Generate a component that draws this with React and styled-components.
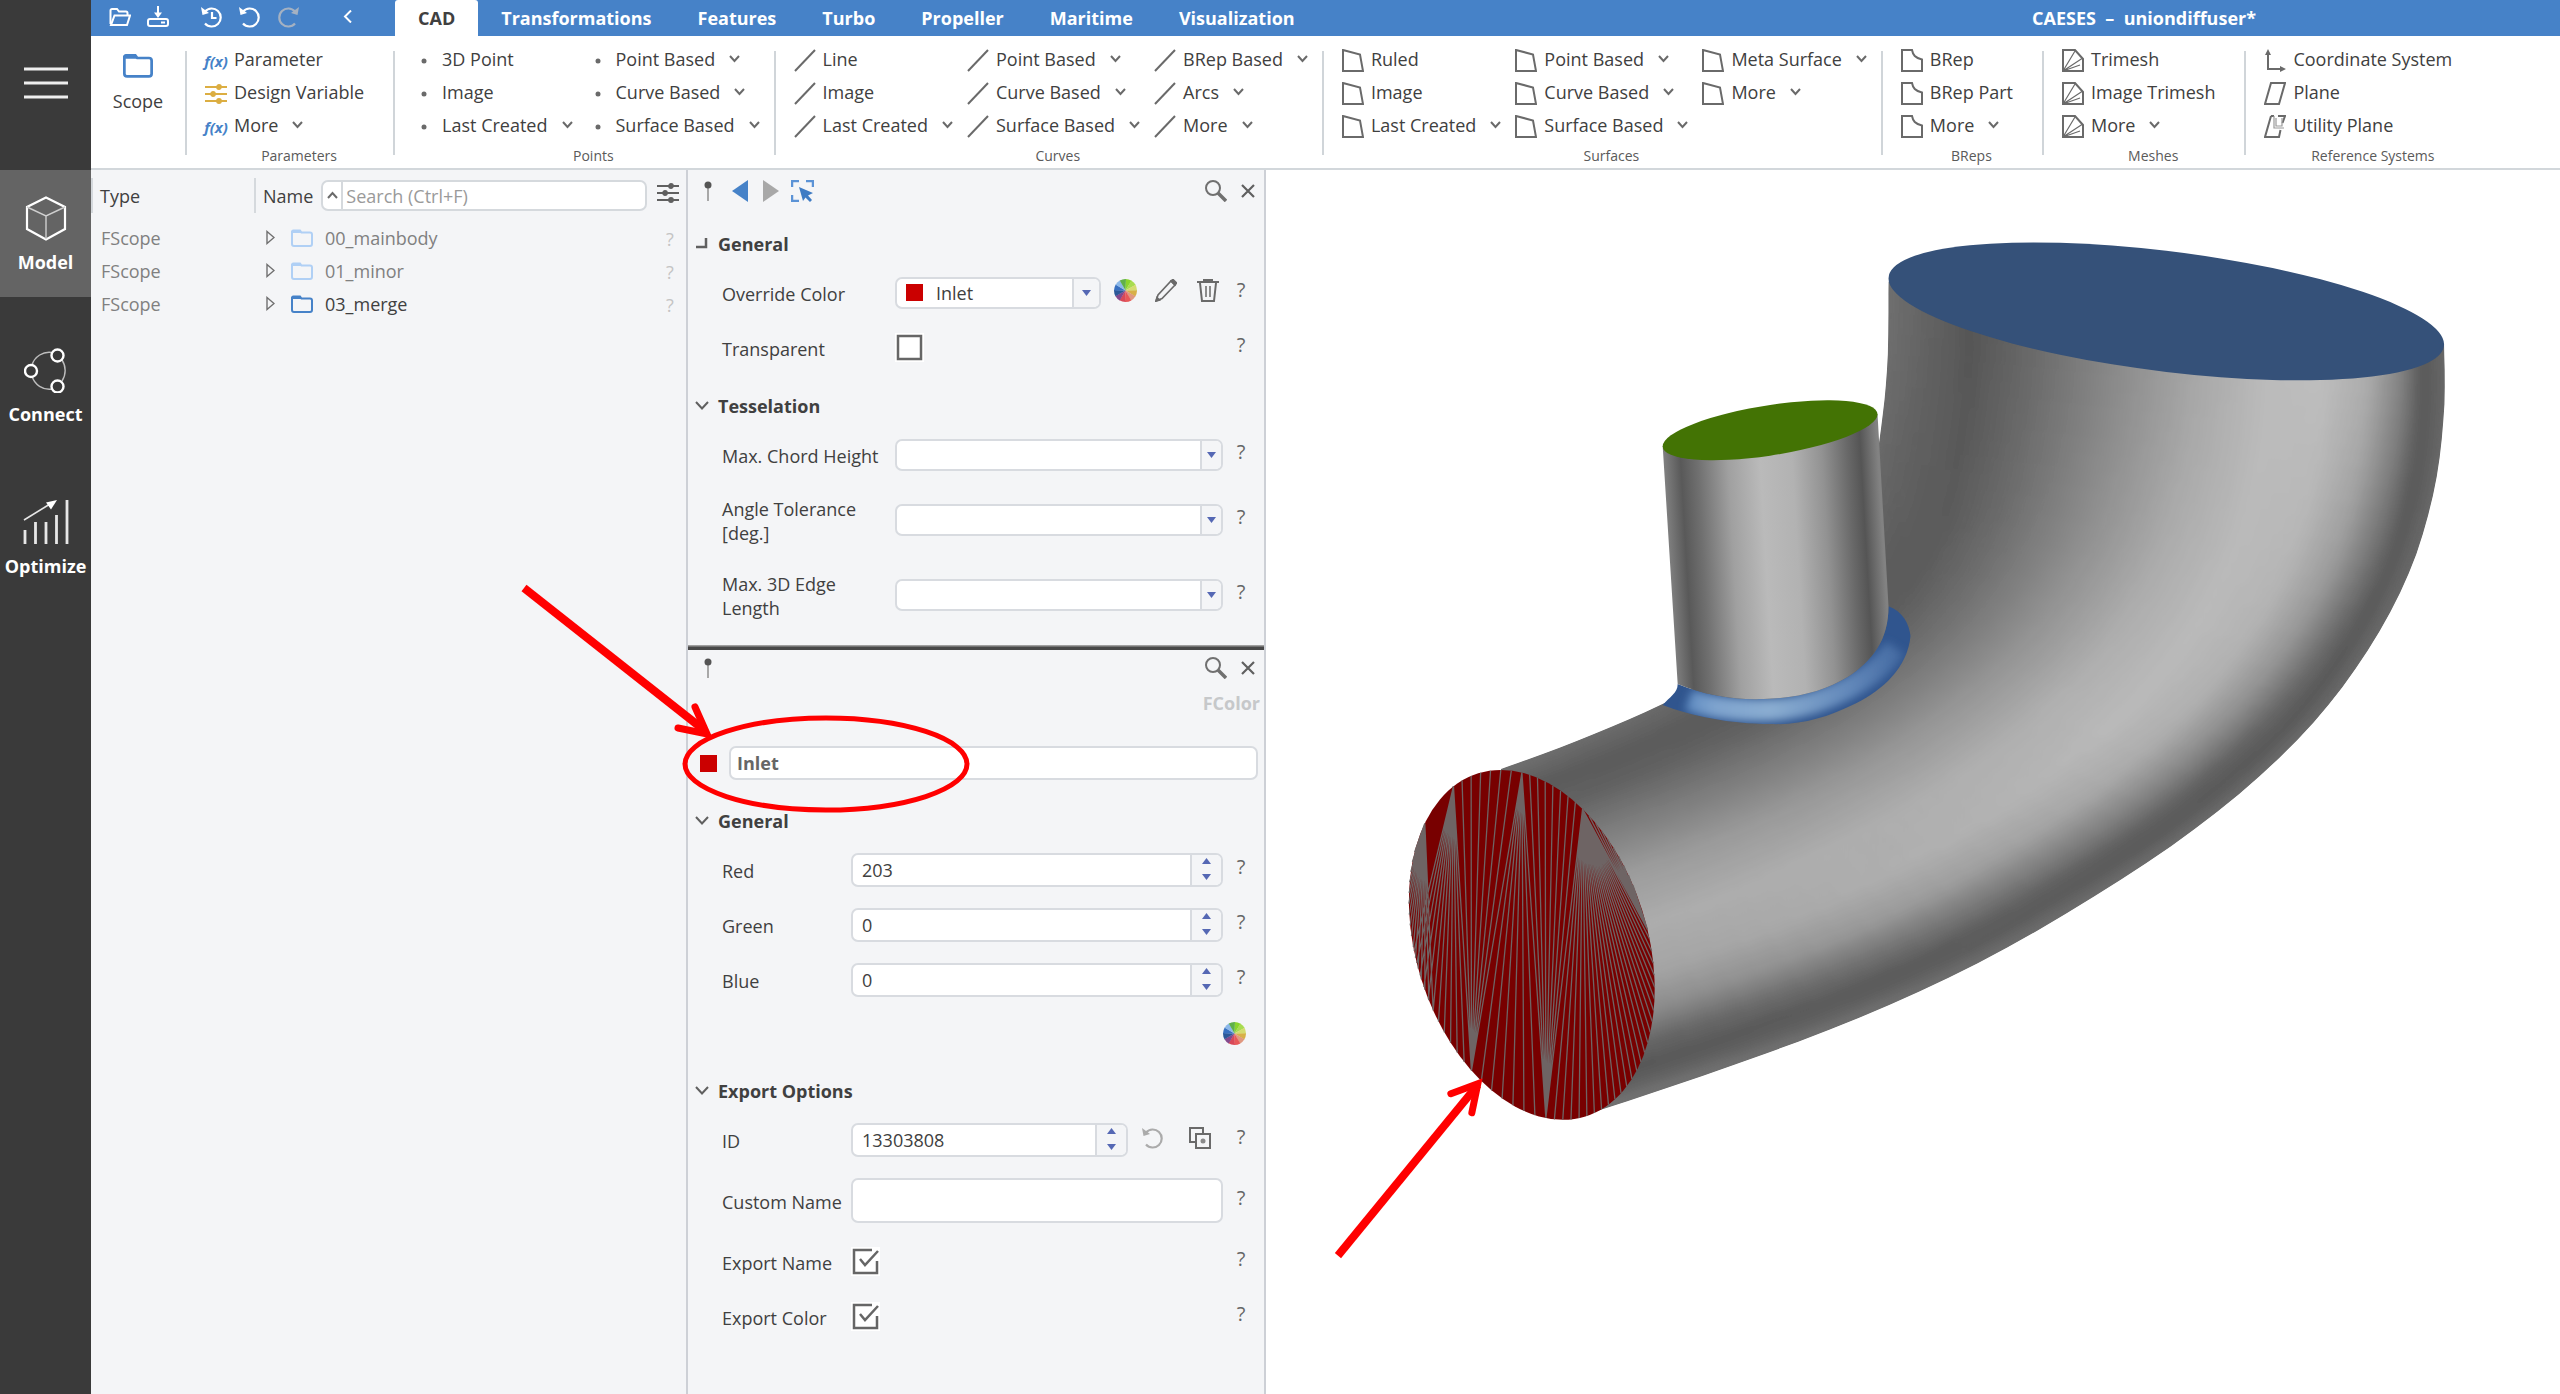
import React from 'react'
import styled, { createGlobalStyle } from 'styled-components'

const GlobalStyle = createGlobalStyle`
  * {
    box-sizing: border-box;
  }

  body {
    margin: 0;
    background: #ffffff;
    color: #404040;
    font-family: "Open Sans", "Noto Sans", sans-serif;
    font-size: 18px;
    line-height: 24px;
  }

  button, input, select {
    margin: 0;
    padding: 0;
    border: 0;
    background: none;
    color: inherit;
    font: inherit;
  }

  svg {
    display: block;
    flex: none;
  }
`

const Page = styled.div`
  display: flex;
  min-height: 100vh;
`

/* ---------- left rail ---------- */

const Rail = styled.nav`
  flex: none;
  width: 91px;
  background: #3a3a3a;
  color: #ffffff;
`

const MenuButton = styled.button`
  display: flex;
  width: 100%;
  height: 170px;
  justify-content: center;
  padding-top: 67px;
`

const Modes = styled.div`
  display: flex;
  flex-direction: column;
  gap: 25px;
`

const ModeButton = styled.button`
  display: flex;
  flex-direction: column;
  align-items: center;
  gap: 9px;
  height: 127px;
  padding-top: 26px;
  font-weight: 700;
  background: ${({ $active }) => ($active ? '#646464' : 'transparent')};
`

/* ---------- title bar ---------- */

const Main = styled.div`
  display: flex;
  flex: 1;
  flex-direction: column;
  min-width: 0;
`

const TopBar = styled.header`
  display: flex;
  align-items: stretch;
  height: 36px;
  background: #4682c8;
  color: #ffffff;
  font-weight: 700;
`

const QuickAccess = styled.div`
  display: flex;
  align-items: center;
  gap: 16px;
  width: 304px;
  padding: 0 36px 3px 18px;
`

const BarButton = styled.button`
  display: flex;
  color: ${({ $off }) => ($off ? '#a4b1c2' : '#ffffff')};
  margin-left: ${({ $apart }) => ($apart ? '16px' : '0')};

  &:last-child {
    margin-left: auto;
  }
`

const Tab = styled.button`
  padding: 0 23px;
  font-weight: 700;
  background: ${({ $active }) => ($active ? '#ffffff' : 'transparent')};
  color: ${({ $active }) => ($active ? '#404040' : '#ffffff')};
  border-radius: 3px 3px 0 0;
`

const WindowTitle = styled.div`
  flex: 1;
  padding: 6px 304px 0 0;
  text-align: right;
  white-space: pre;
`

/* ---------- ribbon ---------- */

const Ribbon = styled.div`
  display: flex;
  height: 134px;
  border-bottom: 2px solid #d2d7db;
`

const ScopeButton = styled.button`
  display: flex;
  flex-direction: column;
  align-items: center;
  gap: 11px;
  width: 94px;
  padding-top: 17px;
`

const Divider = styled.span`
  width: 2px;
  margin: 15px 0 13px;
  background: #d0d5d9;
`

const Group = styled.section`
  display: flex;
  flex-direction: column;
  padding: 6px 0 0 18px;
`

const GroupColumns = styled.div`
  display: flex;
  height: 100px;
`

const GroupColumn = styled.div`
  display: flex;
  flex-direction: column;
  align-items: flex-start;
`

const GroupLabel = styled.div`
  padding-top: 3px;
  font-size: 14px;
  text-align: center;
  color: #5a5a5a;
`

const Tool = styled.button`
  display: flex;
  align-items: center;
  gap: 7px;
  height: 33px;
  padding-right: ${({ $more }) => ($more ? '14px' : '29px')};
  white-space: nowrap;

  & > svg:last-child:not(:first-child) {
    margin-left: 7px;
  }
`

const ToolIcon = styled.span`
  display: flex;
  justify-content: center;
  width: 22px;
  padding-top: 4px;
  color: #6a6a6a;
`

const Fx = styled.span`
  font-size: 15px;
  font-style: italic;
  font-weight: 700;
  color: #4682c8;
`

/* ---------- object tree ---------- */

const Workspace = styled.div`
  position: relative;
  display: flex;
  flex: 1;
  min-height: 0;
`

const TreePane = styled.aside`
  flex: none;
  width: 595px;
  background: #f4f5f7;
`

const Tree = styled.table`
  width: 100%;
  border-collapse: collapse;
  table-layout: fixed;

  th {
    height: 51px;
    padding: 0;
    font-weight: 400;
    text-align: left;
  }

  td {
    height: 33px;
    padding: 0;
    color: #808080;
  }
`

const TypeCol = styled.col`
  width: 163px;
`

const HintCol = styled.col`
  width: 29px;
`

const TypeCell = styled.td`
  && {
    padding-left: 10px;
  }
`

const HeadCell = styled.div`
  display: flex;
  align-items: center;
  height: 35px;
  padding-left: 7px;
  border-left: 2px solid #d5d9dd;
`

const SearchBox = styled.div`
  display: flex;
  flex: 1;
  height: 31px;
  margin: 0 10px 0 8px;
  border: 2px solid #d5d9dd;
  border-radius: 7px;
  background: #ffffff;

  button {
    display: flex;
    align-items: center;
    justify-content: center;
    width: 20px;
    border-right: 2px solid #d5d9dd;
  }

  input {
    flex: 1;
    min-width: 0;
    padding-left: 3px;
    outline: 0;
  }

  input::placeholder {
    color: #9a9a9a;
    opacity: 1;
  }
`

const NodeName = styled.div`
  display: flex;
  align-items: center;
  padding-left: 12px;
  color: ${({ $dim }) => ($dim ? '#808080' : '#404040')};

  button {
    display: flex;
    margin-right: 16px;
  }

  span {
    padding-left: 12px;
  }
`

const HintCell = styled.td`
  && {
    padding: 3px 0 0 9px;
    color: #c4c4c4;
  }
`

/* ---------- inspector ---------- */

const Inspector = styled.aside`
  flex: none;
  width: 580px;
  border: solid #cdd0d6;
  border-width: 0 2px;
  background: #f4f5f7;
`

const Pane = styled.section`
  padding-top: ${({ $first }) => ($first ? '3px' : '0')};
  padding-bottom: 13px;
`

const PaneBar = styled.div`
  display: flex;
  align-items: center;
  height: 36px;
  padding: 0 9px 0 16px;
`

const PaneButton = styled.button`
  display: flex;
  margin-right: ${({ $gap = 0 }) => $gap}px;
`

const Spacer = styled.span`
  flex: 1;
`

const Splitter = styled.hr`
  height: 5px;
  margin: 0;
  border: 0;
  background: linear-gradient(#b4b4b4, #484848 50%);
`

const SectionHead = styled.h2`
  display: flex;
  align-items: center;
  gap: 9px;
  height: 52px;
  margin: ${({ $first }) => ($first ? '4px' : '0')} 0 0;
  padding: 9px 0 0 7px;
  font-size: 18px;
  font-weight: 700;

  button {
    display: flex;
    justify-content: center;
    width: 14px;
  }
`

const Row = styled.div`
  display: grid;
  grid-template-columns: ${({ $label }) => $label}px 1fr 36px;
  align-items: center;
  height: ${({ $height = 55 }) => $height}px;
  padding: 0 5px 0 34px;
`

const RowLabel = styled.label`
  padding: 2px 6px 0 0;
  white-space: pre-line;
`

const Help = styled.button`
  padding-bottom: 5px;
  font-size: 20px;
  color: #666666;
`

const Controls = styled.div`
  display: flex;
  align-items: center;
  padding-right: ${({ $inset = 0 }) => $inset}px;
`

const Field = styled.div`
  display: flex;
  flex: 1;
  height: ${({ $height = 34 }) => $height}px;
  border: 2px solid #d8dbe0;
  border-radius: 7px;
  background: #ffffff;
  overflow: hidden;

  input, select {
    flex: 1;
    width: 0;
    min-width: 0;
    padding-left: ${({ $indent = 9 }) => $indent}px;
    outline: 0;
    appearance: none;
    -moz-appearance: textfield;
  }

  input::-webkit-inner-spin-button {
    display: none;
  }
`

const DropArrow = styled.span`
  display: flex;
  align-items: center;
  justify-content: center;
  width: ${({ $wide }) => ($wide ? '27px' : '21px')};
  border-left: 2px solid #d8dbe0;
  background: #f4f5f7;
  pointer-events: none;
`

const Steps = styled.span`
  display: flex;
  flex-direction: column;
  align-items: center;
  justify-content: space-between;
  width: 31px;
  padding: 3px 0 5px;
  border-left: 2px solid #d8dbe0;
  background: #f4f5f7;
`

const StepButton = styled.button`
  display: flex;
`

const Swatch = styled.span`
  flex: none;
  align-self: center;
  width: 17px;
  height: 17px;
  background: #cb0000;

  ${Field} > & {
    margin-left: 9px;
  }
`

const SideIcon = styled.button`
  display: flex;
  width: 22px;
  margin: 0 0 4px ${({ $gap }) => $gap}px;
`

const CheckBox = styled.span`
  display: grid;
  width: 29px;
  height: 29px;
  background: #ffffff;

  input, svg {
    grid-area: 1 / 1;
    width: 29px;
    height: 29px;
  }

  input {
    appearance: none;
  }

  svg {
    pointer-events: none;
  }
`

const TypeName = styled.div`
  margin-top: 5px;
  padding-right: 4px;
  text-align: right;
  font-weight: 700;
  color: #c6c8ca;
`

const NameRow = styled.div`
  display: flex;
  gap: 12px;
  margin: 31px 6px 10px 12px;
  font-weight: 700;
  color: #666666;
`

const WheelRow = styled.div`
  display: flex;
  align-items: center;
  justify-content: flex-end;
  height: 53px;
  padding-right: 18px;
`

/* ---------- 3d view ---------- */

const View = styled.main`
  flex: 1;
  min-width: 0;
  background: #ffffff;

  svg {
    width: 100%;
    height: 100%;
  }
`

const Markup = styled.svg`
  position: absolute;
  left: 425px;
  top: 410px;
  pointer-events: none;
`

/* ---------- icons ---------- */

const Chevron = ({ up }) => (
  <svg width="11" height="9" viewBox="0 0 11 9" fill="none" stroke="#6a6a6a" strokeWidth="2">
    <path d={up ? 'M1 7 5.5 2 10 7' : 'M1 2 5.5 7 10 2'} />
  </svg>
)

const SectionChevron = () => (
  <svg width="14" height="9" viewBox="0 0 14 9" fill="none" stroke="#606060" strokeWidth="2">
    <path d="M1 1 7 7.5 13 1" />
  </svg>
)

const SectionCorner = () => (
  <svg width="12" height="11" viewBox="0 0 12 11" fill="none" stroke="#606060" strokeWidth="2.5">
    <path d="M10 0V9H0" />
  </svg>
)

const Triangle = ({ up }) => (
  <svg width="9" height="6" viewBox="0 0 9 6" fill="#5568b4">
    <path d={up ? 'M0 6 4.5 0 9 6Z' : 'M0 0H9L4.5 6Z'} />
  </svg>
)

const Folder = ({ width, color }) => (
  <svg width={width} height={Math.round(width * 0.82)} viewBox="0 0 22 18" fill="none" stroke={color} strokeWidth="2">
    <path d="M1 3.5V15a2 2 0 0 0 2 2H19a2 2 0 0 0 2-2V5.5a2 2 0 0 0-2-2H10.5L9 1.5H2.500A1.500 1.500 0 0 0 1 3.500Z" />
    <path d="M1.500 1.200H9L10.500 4H1.500Z" fill={color} stroke="none" />
  </svg>
)

const Sliders = ({ color }) => (
  <svg width="22" height="20" viewBox="0 0 22 20" fill={color} stroke={color} strokeWidth="1.8">
    <path d="M0 3H22M0 10H22M0 17H22" />
    <circle cx="14" cy="3" r="2" />
    <circle cx="8" cy="10" r="2" />
    <circle cx="14" cy="17" r="2" />
  </svg>
)

const Shape = ({ children }) => (
  <svg width="22" height="23" viewBox="0 0 22 23" fill="none" stroke="currentColor" strokeWidth="2">
    {children}
  </svg>
)

const toolIcons = {
  fx: <Fx>f(x)</Fx>,
  sliders: <Sliders color="#dcae42" />,
  point: <Shape><circle cx="11" cy="12" r="2.500" fill="currentColor" stroke="none" /></Shape>,
  curve: <Shape><path d="M1 22 21 1" /></Shape>,
  surface: <Shape><path d="M1 1 18 5.500 21 22H1Z" /></Shape>,
  brep: <Shape><path d="M1 1H11C12 6 14 9 21 10.500V22H1Z" /></Shape>,
  mesh: (
    <Shape>
      <path d="M1 1H13L21 10V22H1Z" />
      <path d="M1 22 13 2M1 22 20 9.500M1 22 18 16" strokeWidth="1.2" />
    </Shape>
  ),
  axes: (
    <Shape>
      <path d="M4 4V20H18" />
      <path d="M1 6 4 0 7 6ZM16 17 22 20 16 23Z" fill="currentColor" stroke="none" />
    </Shape>
  ),
  plane: <Shape><path d="M7 1H21L15 22H1Z" /></Shape>,
  utility: (
    <Shape>
      <path d="M7 1 1 22H15L16.500 15M18.500 8 21 1H14M7 1H10" />
      <path d="M10 1V13H20M12 3V11H18V3" strokeWidth="1.2" stroke="#999999" />
    </Shape>
  ),
}

const OpenIcon = () => (
  <svg width="22" height="18" viewBox="0 0 22 18" fill="none" stroke="currentColor" strokeWidth="2">
    <path d="M1.500 16V2.500A1.500 1.500 0 0 1 3 1H8L10 3.500H17A1.500 1.500 0 0 1 18.500 5V7" />
    <path d="M5.500 7.500H21L18 17H2Z" />
  </svg>
)

const SaveIcon = () => (
  <svg width="22" height="21" viewBox="0 0 22 21" fill="none" stroke="currentColor" strokeWidth="2">
    <path d="M11 0V9" />
    <path d="M7 6.500H15L11 12Z" fill="currentColor" stroke="none" />
    <rect x="1" y="13" width="20" height="7" rx="2" />
    <path d="M14 16.500H18" />
  </svg>
)

const UndoIcon = ({ flip, clock, color = 'currentColor' }) => (
  <svg width="22" height="22" viewBox="0 0 22 22" fill="none" stroke={color} strokeWidth="2.2">
    <g transform={flip ? 'matrix(-1 0 0 1 22 0)' : undefined}>
      <path d="M4 5.500A9 9 0 1 1 4 17.500" />
      <path d="M0 1 1.500 9 8 7Z" fill={color} stroke="none" />
    </g>
    {clock && <path d="M11 6V12H15.500" />}
  </svg>
)

const PinIcon = () => (
  <svg width="8" height="20" viewBox="0 0 8 20">
    <path d="M4 4V20" stroke="#a8a8a8" strokeWidth="2" />
    <circle cx="4" cy="4" r="3.500" fill="#555555" />
  </svg>
)

const SearchIcon = () => (
  <svg width="22" height="22" viewBox="0 0 22 22" fill="none" stroke="#707070">
    <circle cx="8" cy="8" r="7" strokeWidth="2" />
    <path d="M13 13 21 21" strokeWidth="3.500" />
  </svg>
)

const CloseIcon = () => (
  <svg width="14" height="14" viewBox="0 0 14 14" stroke="#606060" strokeWidth="2.2">
    <path d="M1 1 13 13M13 1 1 13" />
  </svg>
)

const wheelColors = ['#8ad42c', '#a8dc50', '#d4dc70', '#d8b048', '#e09880', '#e85858', '#d84858', '#84488c', '#2c5898', '#3870c0', '#8cb8e8', '#60b048']

const ColorWheel = () => (
  <svg width="23" height="23" viewBox="-11.5 -11.5 23 23">
    {wheelColors.map((color, i) => {
      const a = ((i * 30 - 90) * Math.PI) / 180
      const b = a + 0.56
      return (
        <path
          key={color}
          fill={color}
          d={`M0 0 ${11.5 * Math.cos(a)} ${11.5 * Math.sin(a)}A11.5 11.5 0 0 1 ${11.5 * Math.cos(b)} ${11.5 * Math.sin(b)}Z`}
        />
      )
    })}
  </svg>
)

const PencilIcon = () => (
  <svg width="22" height="23" viewBox="0 0 22 23" fill="none" stroke="#6a6a6a" strokeWidth="1.6">
    <path d="M1 22 3 16 16 2 20 6 7 19.500Z" />
    <path d="M16 2 18 0.500 21.500 4 20 6ZM1 22 2 18.500 4.500 21Z" fill="#6a6a6a" />
  </svg>
)

const TrashIcon = () => (
  <svg width="22" height="23" viewBox="0 0 22 23" fill="none" stroke="#6a6a6a" strokeWidth="2">
    <path d="M0 3H22M6 1H16M3 4 5 22H17L19 4" />
    <path d="M9 7V18M13 7V18" strokeWidth="1.5" />
  </svg>
)

const CopyIcon = () => (
  <svg width="22" height="22" viewBox="0 0 22 22" fill="none" stroke="#6a6a6a" strokeWidth="2">
    <path d="M7 15H1V1H14V7" />
    <rect x="7" y="7" width="14" height="14" />
    <circle cx="14" cy="14" r="2.500" fill="#8a8a8a" stroke="none" />
  </svg>
)

const PickIcon = () => (
  <svg width="23" height="22" viewBox="0 0 23 22" fill="none" stroke="#5b93d6" strokeWidth="2.5">
    <path d="M1 7V1H8M15 1H22V7M1 15V21H8" />
    <path d="M8 7 22 13 17 15.500 21 20 19 22 14.500 17.500 12 21Z" fill="#3f7cc4" stroke="none" />
  </svg>
)

const ModelIcon = () => (
  <svg width="42" height="45" viewBox="0 0 42 45" fill="none" stroke="#ffffff" strokeWidth="2.2">
    <path d="M21 1.500 40 11V33L21 43.500 2 33V11Z" />
    <path d="M2 11 21 20 40 11M21 20V43" strokeWidth="1.4" stroke="#cfcfcf" />
  </svg>
)

const ConnectIcon = () => (
  <svg width="44" height="45" viewBox="0 0 44 45" fill="none" stroke="#ffffff" strokeWidth="2.4">
    <path d="M28 4.500A18 18 0 0 0 8 17M8 28A18 18 0 0 0 28 41M38 12A19 19 0 0 1 38 33" strokeWidth="1.4" stroke="#bdbdbd" />
    <circle cx="33.500" cy="7.500" r="6" />
    <circle cx="7" cy="23" r="6" />
    <circle cx="33.500" cy="38.500" r="6" />
  </svg>
)

const OptimizeIcon = () => (
  <svg width="46" height="45" viewBox="0 0 46 45" fill="none" stroke="#e6e6e6" strokeWidth="2.8">
    <path d="M2 30V44M12.500 22V44M23 22V44M33.500 15V44M44 0V44" />
    <path d="M1 20 27 4" strokeWidth="1.6" />
    <path d="M34 0 23 2.500 28 9.500Z" fill="#ffffff" stroke="none" />
  </svg>
)

/* ---------- ribbon content ---------- */

const groups = [
  {
    name: 'Parameters',
    columns: [[['fx', 'Parameter'], ['sliders', 'Design Variable'], ['fx', 'More', true]]],
  },
  {
    name: 'Points',
    columns: [
      [['point', '3D Point'], ['point', 'Image'], ['point', 'Last Created', true]],
      [['point', 'Point Based', true], ['point', 'Curve Based', true], ['point', 'Surface Based', true]],
    ],
  },
  {
    name: 'Curves',
    columns: [
      [['curve', 'Line'], ['curve', 'Image'], ['curve', 'Last Created', true]],
      [['curve', 'Point Based', true], ['curve', 'Curve Based', true], ['curve', 'Surface Based', true]],
      [['curve', 'BRep Based', true], ['curve', 'Arcs', true], ['curve', 'More', true]],
    ],
  },
  {
    name: 'Surfaces',
    columns: [
      [['surface', 'Ruled'], ['surface', 'Image'], ['surface', 'Last Created', true]],
      [['surface', 'Point Based', true], ['surface', 'Curve Based', true], ['surface', 'Surface Based', true]],
      [['surface', 'Meta Surface', true], ['surface', 'More', true]],
    ],
  },
  {
    name: 'BReps',
    columns: [[['brep', 'BRep'], ['brep', 'BRep Part'], ['brep', 'More', true]]],
  },
  {
    name: 'Meshes',
    columns: [[['mesh', 'Trimesh'], ['mesh', 'Image Trimesh'], ['mesh', 'More', true]]],
  },
  {
    name: 'Reference Systems',
    columns: [[['axes', 'Coordinate System'], ['plane', 'Plane'], ['utility', 'Utility Plane']]],
  },
]

const tabs = ['CAD', 'Transformations', 'Features', 'Turbo', 'Propeller', 'Maritime', 'Visualization']

const nodes = [
  { name: '00_mainbody', dim: true },
  { name: '01_minor', dim: true },
  { name: '03_merge', dim: false },
]

/* ---------- pipe geometry ---------- */

// matching stations on the inner and the outer edge of the bend
const inner = [[1888, 281], [1887, 360], [1881, 424], [1870, 490], [1850, 545], [1822, 590], [1785, 627], [1740, 662], [1700, 685], [1640, 714], [1566, 745], [1500, 769]]
const outer = [[2444, 344], [2444, 410], [2434, 490], [2408, 575], [2362, 659], [2300, 737], [2213, 815], [2106, 889], [1980, 962], [1851, 1021], [1714, 1072], [1570, 1120]]

// grey levels across the pipe: at the outlet, in the bend, at the inlet
const stops = [0, 0.08, 0.15, 0.25, 0.4, 0.55, 0.68, 0.78, 0.86, 0.92, 0.96, 1]
const shades = [
  [112, 98, 85, 102, 134, 165, 187, 192, 178, 136, 88, 102],
  [96, 90, 94, 114, 148, 176, 186, 174, 138, 98, 88, 106],
  [112, 90, 98, 124, 158, 172, 160, 134, 96, 86, 98, 118],
]

const spline = (pts, s) => {
  const pos = s * (pts.length - 1)
  const i = Math.min(Math.floor(pos), pts.length - 2)
  const t = pos - i
  const p1 = pts[i]
  const p2 = pts[i + 1]
  const p0 = pts[i - 1] || p1
  const p3 = pts[i + 2] || p2
  return [0, 1].map(
    (k) =>
      0.5 *
      (2 * p1[k] +
        (p2[k] - p0[k]) * t +
        (2 * p0[k] - 5 * p1[k] + 4 * p2[k] - p3[k]) * t * t +
        (3 * p1[k] - p0[k] - 3 * p2[k] + p3[k]) * t * t * t)
  )
}

const mix = (a, b, t) => a * (1 - t) + b * t

const across = (row, t) => {
  const k = Math.max(1, stops.findIndex((stop) => stop >= t))
  return mix(row[k - 1], row[k], (t - stops[k - 1]) / (stops[k] - stops[k - 1]))
}

const shadeAt = (s, t) => {
  const [from, to, u] = s < 0.5 ? [0, 1, s * 2] : [1, 2, s * 2 - 1]
  const v = Math.round(mix(across(shades[from], t), across(shades[to], t), u))
  return `rgb(${v},${v},${v})`
}

const toPoints = (pts) => pts.map((p) => p.map((v) => v.toFixed(1)).join(',')).join(' ')

const steps = 48
const bands = 72
const rings = Array.from({ length: steps + 1 }, (_, i) => ({
  a: spline(inner, i / steps),
  b: spline(outer, i / steps),
}))
const outline = toPoints([...rings.map((r) => r.a), ...rings.map((r) => r.b).reverse()])
const at = (ring, t) => [mix(ring.a[0], ring.b[0], t), mix(ring.a[1], ring.b[1], t)]

const facets = rings.slice(0, -1).flatMap((ring, i) =>
  Array.from({ length: bands }, (_, j) => ({
    points: toPoints([
      at(ring, j / bands),
      at(ring, (j + 1) / bands),
      at(rings[i + 1], (j + 1) / bands),
      at(rings[i + 1], j / bands),
    ]),
    fill: shadeAt((i + 0.5) / steps, (j + 0.5) / bands),
  }))
)

// triangulated inlet: fans of edges, [apex, first, last, count], angles in degrees
const fans = [
  [-80, 98, 134, 7],
  [134, -115, -80, 7],
  [98, -80, -51, 8],
  [-51, -2, 98, 25],
  [-115, 134, 178, 11],
  [-136, 158, 190, 9],
  [-136, 190, 212, 6],
  [-5, -51, -20, 9],
]
const rim = (deg) => {
  const t = (deg * Math.PI) / 180
  return [1531 + 119 * Math.cos(t) + 31 * Math.sin(t), 945 + 175 * Math.sin(t)]
}
const inletEdges = fans
  .flatMap(([apex, from, to, n]) =>
    Array.from({ length: n + 1 }, (_, i) => {
      const [x1, y1] = rim(apex)
      const [x2, y2] = rim(from + ((to - from) * i) / n)
      return `M${x1.toFixed(1)} ${y1.toFixed(1)}L${x2.toFixed(1)} ${y2.toFixed(1)}`
    })
  )
  .join('')

const branch = 'M1662 446 1677 684C1703 695 1733 700 1763 699C1800 698 1825 690 1847 677C1872 660 1888 640 1888 606L1877 414Z'
const fillet = 'M1662 705C1669 697 1677 693 1677 684C1703 695 1733 700 1763 699C1800 698 1825 690 1847 677C1872 660 1888 640 1888 606C1902 611 1909 624 1910 636C1907 668 1882 690 1856 703C1826 718 1800 725 1770 724C1730 724 1690 716 1662 705Z'

const Scene = () => (
  <svg viewBox="1265 170 1295 1224" role="img" aria-label="Pipe with branch">
    <defs>
      <clipPath id="pipe"><polygon points={outline} /></clipPath>
      <clipPath id="fillet"><path d={fillet} /></clipPath>
      <filter id="soft" x="-5%" y="-5%" width="110%" height="110%"><feGaussianBlur stdDeviation="3" /></filter>
      <filter id="glow" x="-20%" y="-40%" width="140%" height="180%"><feGaussianBlur stdDeviation="4" /></filter>
      <linearGradient id="branch" gradientUnits="userSpaceOnUse" x1="1662" y1="446" x2="1877" y2="446" gradientTransform="matrix(1 0 0.058 1 -26 0)">
        <stop offset="0" stopColor="#808080" />
        <stop offset="0.08" stopColor="#595959" />
        <stop offset="0.16" stopColor="#707070" />
        <stop offset="0.3" stopColor="#a0a0a0" />
        <stop offset="0.45" stopColor="#bababa" />
        <stop offset="0.6" stopColor="#b2b2b2" />
        <stop offset="0.74" stopColor="#929292" />
        <stop offset="0.86" stopColor="#686868" />
        <stop offset="0.92" stopColor="#555555" />
        <stop offset="1" stopColor="#828282" />
      </linearGradient>
      <linearGradient id="filletGlow" gradientUnits="userSpaceOnUse" x1="1680" y1="0" x2="1905" y2="0">
        <stop offset="0" stopColor="#5785be" />
        <stop offset="0.15" stopColor="#7ea3ce" />
        <stop offset="0.4" stopColor="#8aadd1" />
        <stop offset="0.75" stopColor="#6288ba" />
        <stop offset="1" stopColor="#41679f" />
      </linearGradient>
    </defs>

    <g clipPath="url(#pipe)">
      <polygon points={outline} fill="#6e6e6e" />
      <g filter="url(#soft)">
        {facets.map((facet, i) => (
          <polygon key={i} points={facet.points} fill={facet.fill} stroke={facet.fill} strokeWidth="1" />
        ))}
      </g>
    </g>
    <circle r="1" transform="matrix(278 33 0 60.600 2166 311)" fill="#355179" />

    <path d={fillet} fill="#30558e" />
    <g clipPath="url(#fillet)">
      <path d="M1688 700C1712 709 1752 712 1782 709C1822 704 1872 682 1895 648" fill="none" stroke="url(#filletGlow)" strokeWidth="22" filter="url(#glow)" />
    </g>
    <path d={branch} fill="url(#branch)" />
    <circle r="1" transform="matrix(107.500 -16 0 25.400 1769.500 430)" fill="#437304" />

    <circle r="1" transform="matrix(119 0 31 175 1531 945)" fill="#780000" />
    <path d={inletEdges} stroke="#6e6464" strokeWidth="1.3" fill="none" />

    <g fill="none" stroke="#ff0000" strokeWidth="7">
      <path d="M1337 1256 1477 1085" strokeWidth="8" />
      <path d="M1450 1094 1477 1084 1471 1113" strokeLinecap="round" />
    </g>
  </svg>
)

/* ---------- inspector parts ---------- */

const Section = ({ title, first, corner, children }) => (
  <>
    <SectionHead $first={first}>
      <button aria-label={`Toggle ${title}`}>{corner ? <SectionCorner /> : <SectionChevron />}</button>
      {title}
    </SectionHead>
    {children}
  </>
)

const Property = ({ id, label, labelWidth, height, inset, children }) => (
  <Row $label={labelWidth} $height={height}>
    <RowLabel htmlFor={id}>{label}</RowLabel>
    <Controls $inset={inset}>{children}</Controls>
    <Help aria-label={`Help for ${id}`}>?</Help>
  </Row>
)

const Combo = ({ id }) => (
  <Field $height={32}>
    <select id={id} defaultValue=""><option value="" /></select>
    <DropArrow><Triangle /></DropArrow>
  </Field>
)

const Spin = ({ id, value }) => (
  <Field>
    <input id={id} type="number" defaultValue={value} />
    <Steps>
      <StepButton aria-label="Increase"><Triangle up /></StepButton>
      <StepButton aria-label="Decrease"><Triangle /></StepButton>
    </Steps>
  </Field>
)

const Check = ({ id, checked }) => (
  <CheckBox>
    <input id={id} type="checkbox" defaultChecked={checked} />
    <svg viewBox="0 0 29 29" fill="none" stroke="#666666" strokeWidth="2.5">
      {checked ? (
        <>
          <path d="M21 3H3V26H26V14" />
          <path d="M9 12 14 18 27 4" />
        </>
      ) : (
        <rect x="3" y="3" width="23" height="23" />
      )}
    </svg>
  </CheckBox>
)

const PaneTools = () => (
  <>
    <Spacer />
    <PaneButton $gap={14} aria-label="Find"><SearchIcon /></PaneButton>
    <PaneButton aria-label="Close"><CloseIcon /></PaneButton>
  </>
)

export default function App() {
  return (
    <Page>
      <GlobalStyle />
      <Rail>
        <MenuButton aria-label="Menu">
          <svg width="44" height="32" viewBox="0 0 44 32" stroke="#eeeeee" strokeWidth="3">
            <path d="M0 2H44M0 16H44M0 30H44" />
          </svg>
        </MenuButton>
        <Modes>
          <ModeButton $active><ModelIcon />Model</ModeButton>
          <ModeButton><ConnectIcon />Connect</ModeButton>
          <ModeButton><OptimizeIcon />Optimize</ModeButton>
        </Modes>
      </Rail>

      <Main>
        <TopBar>
          <QuickAccess>
            <BarButton aria-label="Open"><OpenIcon /></BarButton>
            <BarButton aria-label="Save"><SaveIcon /></BarButton>
            <BarButton $apart aria-label="History"><UndoIcon clock /></BarButton>
            <BarButton aria-label="Undo"><UndoIcon /></BarButton>
            <BarButton $off aria-label="Redo"><UndoIcon flip /></BarButton>
            <BarButton aria-label="Collapse">
              <svg width="16" height="13" viewBox="0 0 16 13" fill="none" stroke="#ffffff" strokeWidth="2">
                <path d="M8 0.500 2 6.500 8 12.500" />
              </svg>
            </BarButton>
          </QuickAccess>
          {tabs.map((tab) => (
            <Tab key={tab} $active={tab === 'CAD'}>{tab}</Tab>
          ))}
          <WindowTitle>{'CAESES  –  uniondiffuser*'}</WindowTitle>
        </TopBar>

        <Ribbon>
          <ScopeButton>
            <Folder width={30} color="#4682c8" />
            Scope
          </ScopeButton>
          {groups.map((group) => (
            <React.Fragment key={group.name}>
              <Divider />
              <Group>
                <GroupColumns>
                  {group.columns.map((column, i) => (
                    <GroupColumn key={i}>
                      {column.map(([icon, label, more]) => (
                        <Tool key={label} $more={more}>
                          <ToolIcon>{toolIcons[icon]}</ToolIcon>
                          {label}
                          {more && <Chevron />}
                        </Tool>
                      ))}
                    </GroupColumn>
                  ))}
                </GroupColumns>
                <GroupLabel>{group.name}</GroupLabel>
              </Group>
            </React.Fragment>
          ))}
        </Ribbon>

        <Workspace>
          <TreePane>
            <Tree>
              <colgroup>
                <TypeCol />
                <col />
                <HintCol />
              </colgroup>
              <thead>
                <tr>
                  <th><HeadCell>Type</HeadCell></th>
                  <th>
                    <HeadCell>
                      <label htmlFor="search">Name</label>
                      <SearchBox>
                        <button aria-label="Search options"><Chevron up /></button>
                        <input id="search" type="text" placeholder="Search (Ctrl+F)" />
                      </SearchBox>
                    </HeadCell>
                  </th>
                  <th><button aria-label="Columns"><Sliders color="#606060" /></button></th>
                </tr>
              </thead>
              <tbody>
                {nodes.map((node) => (
                  <tr key={node.name}>
                    <TypeCell>FScope</TypeCell>
                    <td>
                      <NodeName $dim={node.dim}>
                        <button aria-label={`Expand ${node.name}`}>
                          <svg width="9" height="15" viewBox="0 0 9 15" fill="none" stroke="#707070" strokeWidth="1.4">
                            <path d="M1 1.500V13.500L8 7.500Z" />
                          </svg>
                        </button>
                        <Folder width={22} color={node.dim ? '#b0d0f5' : '#4682c8'} />
                        <span>{node.name}</span>
                      </NodeName>
                    </td>
                    <HintCell>?</HintCell>
                  </tr>
                ))}
              </tbody>
            </Tree>
          </TreePane>

          <Inspector>
            <Pane $first>
              <PaneBar>
                <PaneButton $gap={20} aria-label="Pin"><PinIcon /></PaneButton>
                <PaneButton $gap={15} aria-label="Back">
                  <svg width="16" height="22" viewBox="0 0 16 22"><path d="M16 0V22L0 11Z" fill="#4682c8" /></svg>
                </PaneButton>
                <PaneButton $gap={12} aria-label="Forward">
                  <svg width="16" height="22" viewBox="0 0 16 22"><path d="M0 0V22L16 11Z" fill="#a8a8a8" /></svg>
                </PaneButton>
                <PaneButton aria-label="Select in view"><PickIcon /></PaneButton>
                <PaneTools />
              </PaneBar>
              <Section title="General" first corner>
                <Property id="override" label="Override Color" labelWidth={173} inset={4}>
                  <Field $height={32} $indent={13}>
                    <Swatch />
                    <select id="override" defaultValue="Inlet"><option>Inlet</option></select>
                    <DropArrow $wide><Triangle /></DropArrow>
                  </Field>
                  <SideIcon $gap={13} aria-label="Choose color"><ColorWheel /></SideIcon>
                  <SideIcon $gap={19} aria-label="Edit"><PencilIcon /></SideIcon>
                  <SideIcon $gap={20} aria-label="Delete"><TrashIcon /></SideIcon>
                </Property>
                <Property id="transparent" label="Transparent" labelWidth={173}>
                  <Check id="transparent" />
                </Property>
              </Section>
              <Section title="Tesselation">
                <Property id="chord" label="Max. Chord Height" labelWidth={173}><Combo id="chord" /></Property>
                <Property id="angle" label={'Angle Tolerance\n[deg.]'} labelWidth={173} height={75}><Combo id="angle" /></Property>
                <Property id="edge" label={'Max. 3D Edge\nLength'} labelWidth={173} height={75}><Combo id="edge" /></Property>
              </Section>
            </Pane>

            <Splitter />

            <Pane>
              <PaneBar>
                <PaneButton aria-label="Pin"><PinIcon /></PaneButton>
                <PaneTools />
              </PaneBar>
              <TypeName>FColor</TypeName>
              <NameRow>
                <Swatch />
                <Field $indent={6}><input type="text" aria-label="Name" defaultValue="Inlet" /></Field>
              </NameRow>
              <Section title="General">
                <Property id="red" label="Red" labelWidth={129}><Spin id="red" value="203" /></Property>
                <Property id="green" label="Green" labelWidth={129}><Spin id="green" value="0" /></Property>
                <Property id="blue" label="Blue" labelWidth={129}><Spin id="blue" value="0" /></Property>
                <WheelRow><button aria-label="Pick color"><ColorWheel /></button></WheelRow>
              </Section>
              <Section title="Export Options">
                <Property id="id" label="ID" labelWidth={129} inset={12}>
                  <Spin id="id" value="13303808" />
                  <SideIcon $gap={14} aria-label="Reset"><UndoIcon color="#ababab" /></SideIcon>
                  <SideIcon $gap={25} aria-label="Duplicate"><CopyIcon /></SideIcon>
                </Property>
                <Property id="custom" label="Custom Name" labelWidth={129} height={67}>
                  <Field $height={45}><input id="custom" type="text" /></Field>
                </Property>
                <Property id="exportName" label="Export Name" labelWidth={129}><Check id="exportName" checked /></Property>
                <Property id="exportColor" label="Export Color" labelWidth={129}><Check id="exportColor" checked /></Property>
              </Section>
            </Pane>
          </Inspector>

          <View><Scene /></View>

          <Markup width="460" height="240" viewBox="516 580 460 240" fill="none" stroke="#ff0000">
            <path d="M524 588 704 730" strokeWidth="8" />
            <path d="M695 707 707 734 678 728" strokeWidth="7" strokeLinecap="round" />
            <ellipse cx="826" cy="764" rx="141" ry="46" strokeWidth="5" />
          </Markup>
        </Workspace>
      </Main>
    </Page>
  )
}
